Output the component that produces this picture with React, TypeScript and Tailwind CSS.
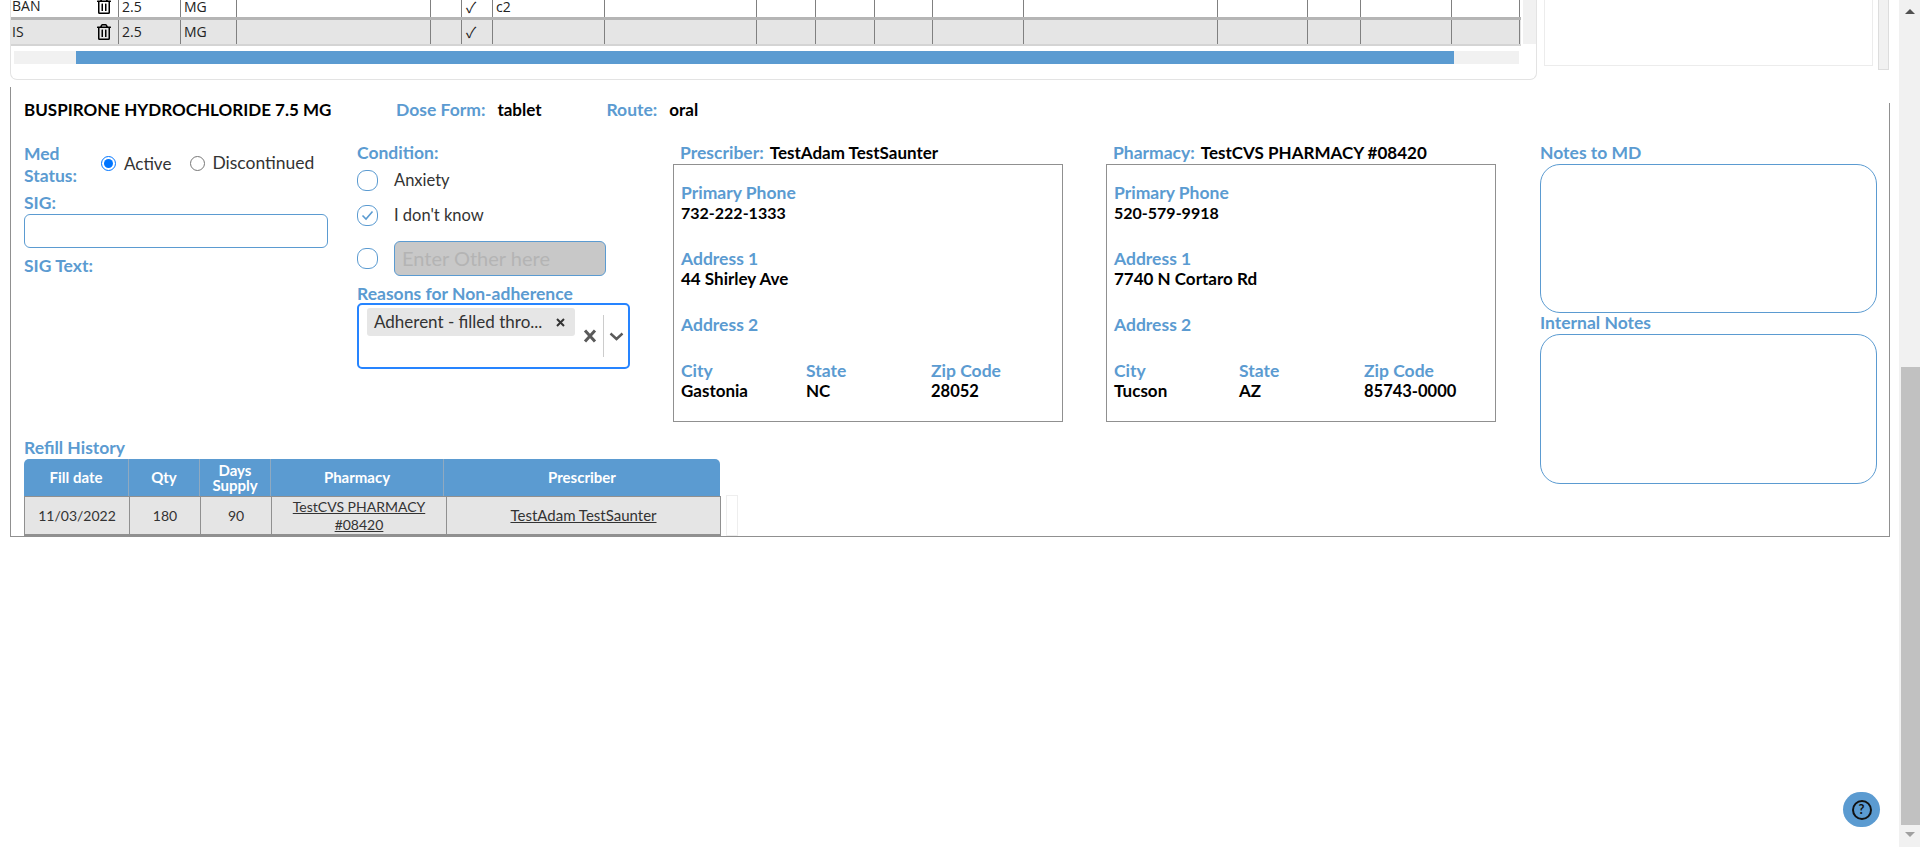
import { FaRegTrashAlt } from "react-icons/fa";

const proxima = "font-['Lato','Open_Sans',sans-serif]";

// widths of the cells in the clipped medication table
const columns = [108, 62, 56, 194, 31, 31, 112, 152, 59, 59, 58, 91, 194, 90, 53, 91, 68];

function MedRow({ name, note, shaded }: { name: string; note?: string; shaded?: boolean }) {
  return (
    <div className={`flex items-stretch ${shaded ? "bg-[#e5e5e5] border-b-2 border-[#d4d4d4] h-[26px]" : "h-[25px] border-b-[3px] border-[#b5b5b5]"}`}>
      {columns.map((w, i) => (
        <div
          key={i}
          style={{ width: w }}
          className={`shrink-0 border-r border-[#808080] pl-[3px] text-[14px] leading-[24px] text-[#222] overflow-hidden ${i === 0 ? "flex items-center justify-between pr-[6px] pl-0" : ""}`}
        >
          {i === 0 && <span className="-ml-[2px]">{name}</span>}
          {i === 0 && <FaRegTrashAlt className="text-[16px] text-black" />}
          {i === 1 && "2.5"}
          {i === 2 && "MG"}
          {i === 5 && <span className="font-['Noto_Sans_CJK_JP',sans-serif] text-[15px] pl-[1px]">✓</span>}
          {i === 6 && note}
        </div>
      ))}
    </div>
  );
}

function Label({ children, className = "" }: { children: React.ReactNode; className?: string }) {
  return <div className={`text-[#5b9bd1] font-bold text-[17.5px] leading-[20px] ${className}`}>{children}</div>;
}

function Circle({ checked }: { checked?: boolean }) {
  return (
    <div className="w-[21px] h-[21px] shrink-0 rounded-[9px] border border-[#5b9bd1] bg-white flex items-center justify-center">
      {checked && (
        <svg width="13" height="11" viewBox="0 0 13 11" fill="none">
          <path d="M1.5 5.5 L5 9 L11.5 1.5" stroke="#5b9bd1" strokeWidth="1.6" />
        </svg>
      )}
    </div>
  );
}

function Field({ label, value, size = "text-[17px]", className = "" }: { label: string; value?: string; size?: string; className?: string }) {
  return (
    <div className={className}>
      <Label>{label}</Label>
      {value && <div className={`h-[20px] ${size} leading-[20px] font-bold text-black`}>{value}</div>}
    </div>
  );
}

function ContactCard(props: {
  title: string;
  name: string;
  phone: string;
  address: string;
  city: string;
  state: string;
  zip: string;
  width: string;
}) {
  return (
    <div className={props.width}>
      <div className="flex h-[21px] items-start pl-[7px] gap-[6px]">
        <Label>{props.title}</Label>
        <span className="text-[17px] leading-[20px] font-bold text-black">{props.name}</span>
      </div>
      <div className="h-[258px] w-[390px] border border-[#909090] pl-[7px] pt-[18px] flex flex-col gap-[26px]">
        <Field label="Primary Phone" value={props.phone} size="text-[16px]" />
        <Field label="Address 1" value={props.address} />
        <Field label="Address 2" />
        <div className="flex">
          <Field label="City" value={props.city} className="w-[125px]" />
          <Field label="State" value={props.state} className="w-[125px]" />
          <Field label="Zip Code" value={props.zip} size="text-[16.5px]" />
        </div>
      </div>
    </div>
  );
}

function RefillTable() {
  const head = "flex items-center justify-center text-center border-r border-[#8fa9c0] text-white font-bold text-[15px] leading-[15px]";
  const cell = "flex items-center justify-center text-center border-r border-[#909090] text-[#333] text-[14px] leading-[18px]";
  return (
    <div className="flex items-end">
      <div className="w-[697px]">
        <div className="flex h-[37px] w-[696px] bg-[#5b9bd1] rounded-t-[5px]">
          <div className={`${head} w-[105px]`}>Fill date</div>
          <div className={`${head} w-[71px]`}>Qty</div>
          <div className={`${head} w-[71px]`}>Days<br />Supply</div>
          <div className={`${head} w-[173px]`}>Pharmacy</div>
          <div className={`${head} flex-1 border-r-0`}>Prescriber</div>
        </div>
        <div className="flex h-[40px] bg-[#e5e5e5] border border-t-[#909090] border-[#909090] border-b-2">
          <div className={`${cell} w-[105px]`}>11/03/2022</div>
          <div className={`${cell} w-[71px]`}>180</div>
          <div className={`${cell} w-[71px]`}>90</div>
          <div className={`${cell} w-[175px] underline text-[14.5px]`}>TestCVS PHARMACY<br />#08420</div>
          <div className="flex-1 flex items-center justify-center text-[#333] text-[15px] underline">TestAdam TestSaunter</div>
        </div>
      </div>
      <div className="ml-[5px] h-[41px] w-[12px] border border-[#eeeeee] bg-white" />
    </div>
  );
}

export default function App() {
  return (
    <div className={`h-[847px] w-[1920px] flex overflow-hidden bg-white relative ${proxima}`}>
      <div className="w-[1899px] shrink-0">
        {/* clipped medication list */}
        <div className="flex h-[87px] pl-[10px] items-start">
          <div className="w-[1527px] h-[80px] border border-t-0 border-[#e3e3e3] rounded-b-[7px] font-['Open_Sans',sans-serif]">
            <div className="flex h-[56px] -mt-[5px]">
              <div className="w-[1510px] overflow-hidden shrink-0">
                <MedRow name="BAN" note="c2" />
                <MedRow name="IS" shaded />
              </div>
              <div className="ml-[2px] w-[13px] h-[49px] bg-[#f1f1f1]" />
            </div>
            <div className="ml-[3px] w-[1505px] h-[13px] bg-[#f1f1f1] pl-[62px]">
              <div className="w-[1378px] h-full bg-[#5b9bd1]" />
            </div>
          </div>
          <div className="ml-[7px] w-[329px] h-[66px] border border-t-0 border-[#ececec]" />
          <div className="ml-[5px] w-[11px] h-[70px] bg-[#f1f1f1] border border-t-0 border-[#dddddd]" />
        </div>

        {/* selected medication detail */}
        <div className="ml-[10px] w-[1880px] h-[450px] flex border-l border-b border-[#909090]">
          <div className="flex-1 pl-[13px]">
            <div className="flex items-center h-[20px] mt-[13px] text-[17px] font-bold">
              <span className="w-[372px] text-black">BUSPIRONE HYDROCHLORIDE 7.5 MG</span>
              <Label>Dose Form:</Label>
              <span className="ml-[12px] w-[109px] text-black">tablet</span>
              <Label>Route:</Label>
              <span className="ml-[12px] text-black">oral</span>
            </div>
            <div className="flex mt-[23px]">
              <div className="w-[1516px] h-[390px] flex flex-col">
                <div className="flex h-[285px]">
                  {/* status and sig */}
                  <div className="w-[333px]">
                    <div className="flex items-center h-[44px]">
                      <Label className="w-[77px] leading-[22px]">Med<br />Status:</Label>
                      <label className="flex items-center text-[17px] text-[#333] -mt-[3px]">
                        <input type="radio" readOnly checked className="w-[15px] h-[15px] accent-[#0075ff]" />
                        <span className="ml-[8px]">Active</span>
                      </label>
                      <label className="flex items-center text-[17.5px] text-[#333] ml-[19px] -mt-[3px]">
                        <input type="radio" readOnly className="w-[15px] h-[15px]" />
                        <span className="ml-[7px]">Discontinued</span>
                      </label>
                    </div>
                    <Label className="mt-[6px]">SIG:</Label>
                    <div className="mt-[1px] w-[304px] h-[34px] rounded-[6px] border border-[#5b9bd1]" />
                    <Label className="mt-[8px]">SIG Text:</Label>
                  </div>
                  {/* condition */}
                  <div className="w-[316px]">
                    <Label>Condition:</Label>
                    <div className="mt-[7px] flex items-center h-[21px] text-[16.5px] text-[#333]">
                      <Circle />
                      <span className="ml-[16px]">Anxiety</span>
                    </div>
                    <div className="mt-[14px] flex items-center h-[21px] text-[16.5px] text-[#333]">
                      <Circle checked />
                      <span className="ml-[16px]">I don&apos;t know</span>
                    </div>
                    <div className="mt-[15px] flex items-center h-[35px]">
                      <Circle />
                      <div className="ml-[16px] w-[212px] h-[35px] rounded-[6px] border border-[#5b9bd1] bg-[#c8c8c8] pl-[7px] text-[20px] leading-[32px] text-[#b4b4b4]">
                        Enter Other here
                      </div>
                    </div>
                    <Label className="mt-[8px] h-[19px]">Reasons for Non-adherence</Label>
                    <div className="w-[273px] h-[66px] rounded-[5px] border-2 border-[#2684ff] flex">
                      <div className="w-[224px] pl-[8px] pt-[3px]">
                        <div className="w-[208px] h-[28px] bg-[#e6e6e6] rounded-[3px] flex items-center pl-[7px] text-[17px] text-[#333]">
                          <span className="w-[182px] whitespace-nowrap">Adherent - filled thro...</span>
                          <svg width="9" height="9" viewBox="0 0 9 9"><path d="M1 1 L8 8 M8 1 L1 8" stroke="#333" strokeWidth="2" /></svg>
                        </div>
                      </div>
                      <div className="flex items-center">
                        <svg width="14" height="14" viewBox="0 0 14 14"><path d="M2 1.5 L12 12.5 M12 1.5 L2 12.5" stroke="#5a5a5a" strokeWidth="3" /></svg>
                        <div className="ml-[6px] w-px h-[42px] bg-[#cccccc]" />
                        <svg className="ml-[5px]" width="15" height="9" viewBox="0 0 15 9" fill="none"><path d="M1.5 1.5 L7.5 7 L13.5 1.5" stroke="#5a5a5a" strokeWidth="2.4" /></svg>
                      </div>
                    </div>
                  </div>
                  <ContactCard width="w-[433px]" title="Prescriber:" name="TestAdam TestSaunter" phone="732-222-1333" address="44 Shirley Ave" city="Gastonia" state="NC" zip="28052" />
                  <ContactCard width="w-[434px]" title="Pharmacy:" name="TestCVS PHARMACY #08420" phone="520-579-9918" address="7740 N Cortaro Rd" city="Tucson" state="AZ" zip="85743-0000" />
                </div>
                <div className="mt-[16px]">
                  <Label className="mb-[1px]">Refill History</Label>
                  <RefillTable />
                </div>
              </div>
              {/* notes */}
              <div className="w-[337px] shrink-0">
                <Label className="h-[21px]">Notes to MD</Label>
                <div className="h-[149px] rounded-[20px] border border-[#5b9bd1]" />
                <Label className="h-[21px]">Internal Notes</Label>
                <div className="h-[150px] rounded-[20px] border border-[#5b9bd1]" />
              </div>
            </div>
          </div>
          <div className="w-px mt-[16px] bg-[#909090]" />
        </div>
      </div>

      {/* page scrollbar */}
      <div className="w-[21px] h-full bg-[#f1f1f1] flex flex-col items-center">
        <div className="h-[367px] w-full flex justify-center pt-[9px]">
          <div className="w-0 h-0 border-x-[5px] border-x-transparent border-b-[5px] border-b-[#505050]" />
        </div>
        <div className="w-[19px] ml-[2px] h-[458px] bg-[#c1c1c1]" />
        <div className="pt-[7px]">
          <div className="w-0 h-0 border-x-[5px] border-x-transparent border-t-[5px] border-t-[#a0a0a0]" />
        </div>
      </div>

      {/* help button */}
      <div className="absolute left-[1843px] top-[792px] w-[37px] h-[35px] rounded-full bg-[#5b9bd1] flex items-center justify-center">
        <div className="w-[20px] h-[20px] rounded-full border-2 border-[#111] flex items-center justify-center text-[13px] font-bold text-[#111]">?</div>
      </div>
    </div>
  );
}
